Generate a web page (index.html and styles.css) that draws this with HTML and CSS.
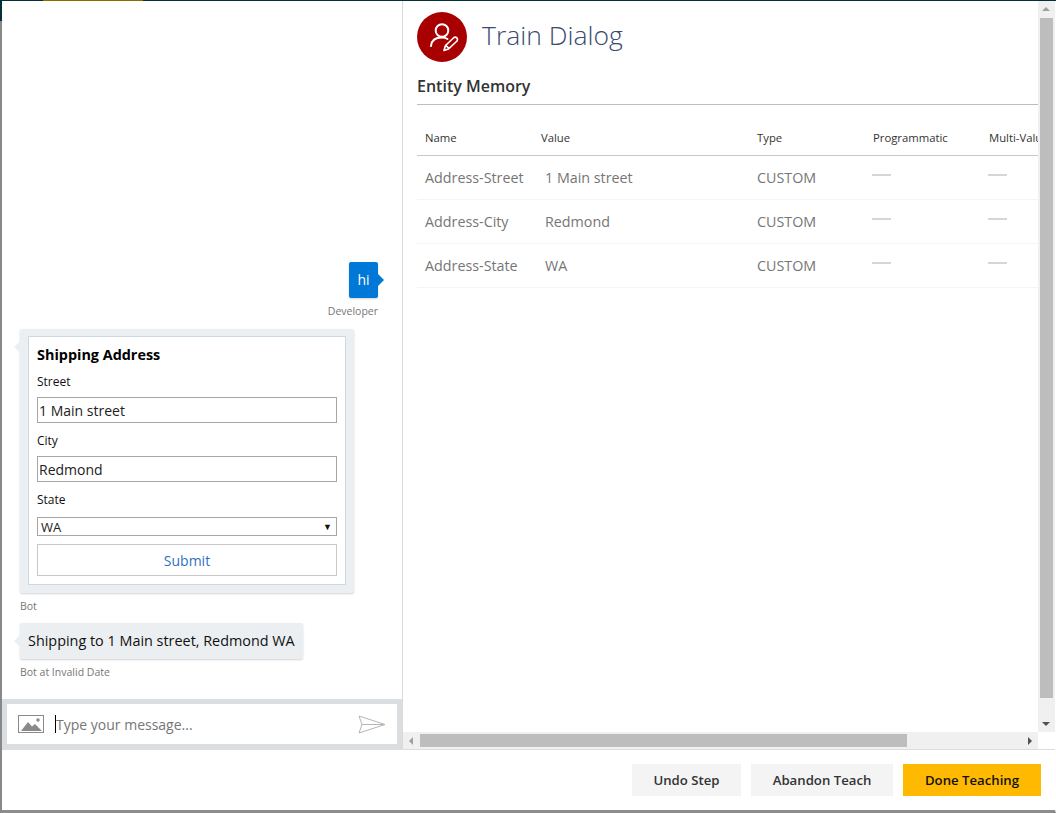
FILE: index.html
```html
<!DOCTYPE html>
<html lang="en">
<head>
  <meta charset="UTF-8">
  <meta name="viewport" content="width=device-width, initial-scale=1.0">
  <title>Train Dialog</title>
  <link rel="stylesheet" href="styles.css">
</head>
<body>
  <div class="topbar"><span class="topbar-tab"></span></div>
  <div class="dialog">
    <span class="corner"></span>
    <div class="panes">
      <!-- Chat -->
      <div class="chat">
        <div class="history">
          <div class="msg msg-user">
            <div class="bubble bubble-user">hi</div>
            <div class="from">Developer</div>
          </div>
          <div class="msg">
            <div class="bubble bubble-card">
              <form class="card">
                <div class="card-title">Shipping Address</div>
                <label class="card-label" for="street">Street</label>
                <input class="card-input" type="text" id="street" value="1 Main street">
                <label class="card-label" for="city">City</label>
                <input class="card-input" type="text" id="city" value="Redmond">
                <label class="card-label" for="state">State</label>
                <div class="card-select">
                  <select id="state"><option>WA</option></select>
                </div>
                <button class="card-submit" type="button">Submit</button>
              </form>
            </div>
            <div class="from">Bot</div>
          </div>
          <div class="msg">
            <div class="bubble bubble-bot">Shipping to 1 Main street, Redmond WA</div>
            <div class="from">Bot at Invalid Date</div>
          </div>
        </div>
        <div class="composer">
          <svg class="icon-image" width="26" height="18" viewBox="0 0 26 18">
            <rect x="0.5" y="0.5" width="25" height="17" fill="#fff" stroke="#8a8a8a"/>
            <path d="M3 16 L10 7 L14 11.5 L17 9 L24 16 Z" fill="#8a8a8a"/>
            <circle cx="20" cy="5" r="1.7" fill="#8a8a8a"/>
          </svg>
          <span class="caret"></span>
          <input class="composer-input" type="text" placeholder="Type your message...">
          <svg class="icon-send" width="28" height="19" viewBox="0 0 28 19">
            <path d="M1 1 L27 9.5 L1 18 L4 9.5 Z M4 9.5 L27 9.5" fill="none" stroke="#b5b5b5"/>
          </svg>
        </div>
      </div>

      <!-- Memoria -->
      <div class="side">
        <div class="side-view">
          <div class="side-content">
            <div class="heading">
              <div class="heading-icon">
                <svg width="50" height="50" viewBox="0 0 50 50">
                  <circle cx="25" cy="18.5" r="6.3" fill="none" stroke="#fff" stroke-width="2"/>
                  <path d="M14 34 C14.5 28 19 25.5 25 25.5 C27 25.5 29 26 30.5 27" fill="none" stroke="#fff" stroke-width="2" stroke-linecap="round"/>
                  <path d="M27 38.5 L28.5 33.5 L37 25.5 Q38.5 24.5 40 26 Q41 27.5 40 29 L31.5 37 Z M29 33.5 L32 36.5" fill="none" stroke="#fff" stroke-width="1.7" stroke-linejoin="round"/>
                </svg>
              </div>
              <div class="heading-text">Train Dialog</div>
            </div>
            <div class="section-title">Entity Memory</div>
            <table class="memory">
              <thead>
                <tr><th>Name</th><th class="col-value">Value</th><th>Type</th><th>Programmatic</th><th>Multi-Value</th></tr>
              </thead>
              <tbody>
                <tr><td>Address-Street</td><td class="cell-value">1 Main street</td><td>CUSTOM</td><td><span class="dash"></span></td><td><span class="dash"></span></td></tr>
                <tr><td>Address-City</td><td class="cell-value">Redmond</td><td>CUSTOM</td><td><span class="dash"></span></td><td><span class="dash"></span></td></tr>
                <tr><td>Address-State</td><td class="cell-value">WA</td><td>CUSTOM</td><td><span class="dash"></span></td><td><span class="dash"></span></td></tr>
              </tbody>
            </table>
          </div>
          <div class="vscroll">
            <span class="arrow arrow-up"></span>
            <div class="vscroll-thumb"></div>
            <span class="arrow arrow-down"></span>
          </div>
        </div>
        <div class="hscroll-row">
          <div class="hscroll">
            <span class="arrow arrow-left"></span>
            <div class="hscroll-track"><div class="hscroll-thumb"></div></div>
            <span class="arrow arrow-right"></span>
          </div>
          <div class="scroll-corner"></div>
        </div>
      </div>
    </div>

    <div class="footer">
      <button class="btn" type="button">Undo Step</button>
      <button class="btn btn-wide" type="button">Abandon Teach</button>
      <button class="btn btn-primary" type="button">Done Teaching</button>
    </div>
  </div>
</body>
</html>
```

FILE: styles.css
```css
* {
  box-sizing: border-box;
}
html, body {
  height: 100%;
}
body {
  margin: 0;
  display: flex;
  flex-direction: column;
  height: 813px;
  overflow: hidden;
  background: #fff;
  font-family: "Open Sans", "Noto Sans", Arial, sans-serif;
  color: #333;
}
.topbar {
  height: 1px;
  background: #04303a;
  flex: none;
  padding-left: 43px;
}
.topbar-tab {
  display: block;
  width: 100px;
  height: 1px;
  background: #8f6a00;
}
.dialog {
  flex: 1;
  min-height: 0;
  display: flex;
  flex-direction: column;
  position: relative;
  border-left: 2px solid #888;
  border-bottom: 3px solid #8c8c8c;
  border-right: 1px solid #fff;
}
.corner {
  position: absolute;
  left: -2px;
  top: 0;
  width: 2px;
  height: 20px;
  background: #04303a;
}
.panes {
  flex: 1;
  min-height: 0;
  display: flex;
}

/* Chat */
.chat {
  width: 401px;
  flex: none;
  display: flex;
  flex-direction: column;
  border-right: 1px solid #d9d9d9;
}
.history {
  flex: 1;
  min-height: 0;
  display: flex;
  flex-direction: column;
  justify-content: flex-end;
  padding: 0 24px 20px 18px;
}
.msg {
  display: flex;
  flex-direction: column;
  align-items: flex-start;
  margin-top: 10px;
}
.msg-user {
  align-items: flex-end;
  margin-bottom: 1px;
}
.from {
  font-size: 10.5px;
  line-height: 14px;
  margin-top: 6px;
  color: #767676;
}
.bubble {
  position: relative;
  border-radius: 2px;
  box-shadow: 0 1px 2px rgba(0, 0, 0, 0.18);
}
.bubble::after {
  content: "";
  position: absolute;
  top: 12px;
  border: 6px solid transparent;
}
.bubble-user {
  width: 29px;
  height: 36px;
  background: #0078d7;
  color: #fff;
  font-size: 14px;
  line-height: 36px;
  text-align: center;
}
.bubble-user::after {
  left: 100%;
  border-right-width: 0;
  border-left-color: #0078d7;
}
.bubble-card, .bubble-bot {
  background: #eceff1;
}
.bubble-card::after, .bubble-bot::after {
  right: 100%;
  border-left-width: 0;
  border-right-color: #eceff1;
}
.bubble-card {
  width: 334px;
  padding: 7px 8px 8px;
}
.bubble-bot {
  height: 36px;
  padding: 0 8px;
  font-size: 14.4px;
  line-height: 36px;
  color: #111;
  white-space: nowrap;
}
.card {
  display: flex;
  flex-direction: column;
  background: #fff;
  border: 1px solid #cdd8e3;
  padding: 8px 8px 8px;
  height: 249px;
}
.card-title {
  font-size: 14.4px;
  font-weight: 700;
  line-height: 20px;
  color: #000;
}
.card-label {
  font-size: 12px;
  line-height: 16px;
  margin-top: 9px;
  margin-bottom: 7px;
  color: #111;
}
.card-input {
  height: 26px;
  margin-bottom: 1px;
  border: 1px solid #a6a6a6;
  padding: 0 1px;
  font: inherit;
  font-size: 14px;
  color: #222;
  outline: none;
  border-radius: 0;
}
.card-select {
  position: relative;
  margin-top: 2px;
  margin-bottom: 8px;
}
.card-select::after {
  content: "▼";
  position: absolute;
  right: 5px;
  top: 3px;
  font-size: 9px;
  line-height: 13px;
  color: #111;
}
.card-select select {
  display: block;
  width: 100%;
  height: 19px;
  appearance: none;
  border: 1px solid #a6a6a6;
  border-radius: 0;
  background: #fff;
  padding: 0 3px;
  font: inherit;
  font-size: 13px;
  color: #222;
}
.card-submit {
  height: 32px;
  background: #fff;
  border: 1px solid #c8c8c8;
  font: inherit;
  font-size: 14px;
  color: #2f72c4;
}
.composer {
  flex: none;
  height: 50px;
  border: 5px solid #dbdee1;
  display: flex;
  align-items: center;
  background: #fff;
  padding: 0 11px 0 11px;
}
.icon-image {
  flex: none;
  margin-right: 11px;
}
.caret {
  flex: none;
  width: 1px;
  height: 18px;
  background: #000;
}
.composer-input {
  flex: 1;
  min-width: 0;
  border: none;
  outline: none;
  padding: 0;
  font: inherit;
  font-size: 14px;
  color: #333;
}
.composer-input::placeholder {
  color: #767676;
  opacity: 1;
}
.icon-send {
  flex: none;
}

/* Panel derecho */
.side {
  flex: 1;
  min-width: 0;
  display: flex;
  flex-direction: column;
}
.side-view {
  flex: 1;
  min-height: 0;
  display: flex;
}
.side-content {
  flex: 1;
  min-width: 0;
  overflow: hidden;
  padding: 11px 0 0 14px;
}
.heading {
  display: flex;
  align-items: center;
  gap: 15px;
  height: 50px;
}
.heading-icon {
  width: 50px;
  height: 50px;
  border-radius: 50%;
  background: #a80000;
  flex: none;
}
.heading-icon svg {
  display: block;
}
.heading-text {
  font-size: 26.5px;
  font-weight: 300;
  line-height: 40px;
  padding-bottom: 4px;
  color: #3a4a70;
}
.section-title {
  margin-top: 12px;
  height: 31px;
  line-height: 24px;
  font-size: 16px;
  font-weight: 600;
  color: #333;
  border-bottom: 1px solid #bdbdbd;
}
.memory {
  width: 680px;
  table-layout: fixed;
  border-collapse: collapse;
  margin-top: 15px;
}
.memory th {
  width: 116px;
  height: 35px;
  padding: 0 0 0 8px;
  text-align: left;
  font-size: 11.3px;
  font-weight: 400;
  color: #333;
  white-space: nowrap;
  overflow: hidden;
  border-bottom: 1px solid #c8c8c8;
}
.memory th.col-value {
  width: 216px;
}
.memory td {
  height: 44px;
  padding: 0 0 0 8px;
  font-size: 14.3px;
  color: #767676;
  white-space: nowrap;
  border-bottom: 1px solid #f4f4f4;
}
.memory td.cell-value {
  padding-left: 12px;
}
.dash {
  display: block;
  width: 19px;
  height: 2px;
  margin: 0 0 4px -1px;
  background: #d6d6d6;
}

/* Barras de desplazamiento */
.vscroll {
  width: 17px;
  flex: none;
  background: #f0f0f0;
  display: flex;
  flex-direction: column;
  align-items: center;
  position: relative;
  padding-top: 17px;
}
.vscroll-thumb {
  width: 13px;
  height: 680px;
  background: #bdbdbd;
}
.hscroll-row {
  flex: none;
  height: 17px;
  display: flex;
}
.hscroll {
  flex: 1;
  position: relative;
  background: #f0f0f0;
  padding: 2px 0 1px 17px;
}
.hscroll-track {
  height: 14px;
}
.hscroll-thumb {
  width: 487px;
  height: 13px;
  background: #bdbdbd;
}
.scroll-corner {
  width: 17px;
  background: #fff;
}
.arrow {
  position: absolute;
  width: 0;
  height: 0;
  border: 4px solid transparent;
}
.arrow-up {
  top: 6px;
  left: 4px;
  border-top-width: 0;
  border-bottom-color: #a0a0a0;
}
.arrow-down {
  bottom: 6px;
  left: 4px;
  border-bottom-width: 0;
  border-top-color: #505050;
}
.arrow-left {
  left: 6px;
  top: 5px;
  border-left-width: 0;
  border-right-color: #a0a0a0;
}
.arrow-right {
  right: 6px;
  top: 5px;
  border-right-width: 0;
  border-left-color: #505050;
}

/* Pie */
.footer {
  flex: none;
  height: 61px;
  border-top: 1px solid #ddd;
  display: flex;
  justify-content: flex-end;
  align-items: flex-start;
  gap: 10px;
  padding: 14px 14px 0 0;
}
.btn {
  height: 32px;
  padding: 0;
  width: 109px;
  border: none;
  background: #f4f4f4;
  font: inherit;
  font-size: 13.2px;
  font-weight: 600;
  color: #333;
}
.btn-wide {
  width: 142px;
}
.btn-primary {
  width: 138px;
  background: #ffb900;
  color: #111;
}
```
